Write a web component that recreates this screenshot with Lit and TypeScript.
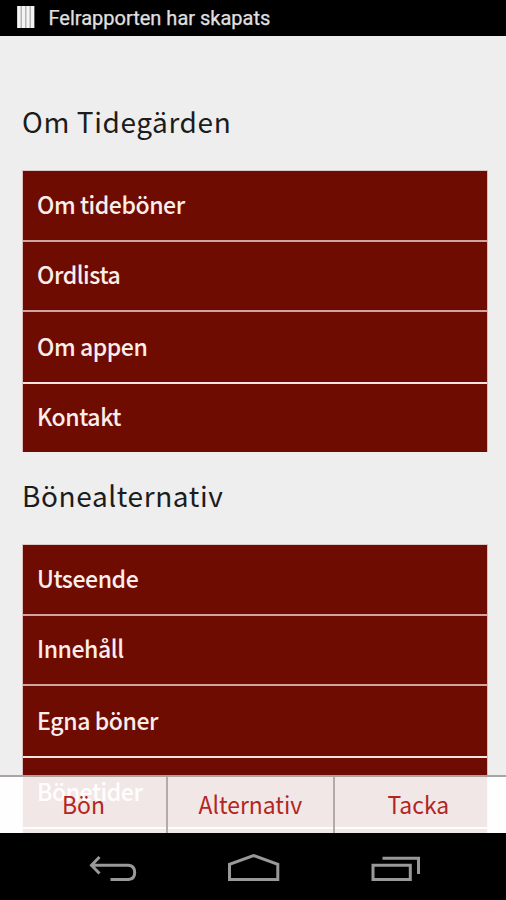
import { LitElement, html, css } from "lit";
import { customElement } from "lit/decorators.js";

interface Row { label: string; height: number; leading: number; line: string; }

const about: Row[] = [
  { label: "Om tideböner", height: 69, leading: 65, line: "soft" },
  { label: "Ordlista", height: 68, leading: 64, line: "soft" },
  { label: "Om appen", height: 70, leading: 68, line: "strong" },
  { label: "Kontakt", height: 68, leading: 64, line: "none" },
];
const prayer: Row[] = [
  { label: "Utseende", height: 69, leading: 66, line: "soft" },
  { label: "Innehåll", height: 68, leading: 64, line: "soft" },
  { label: "Egna böner", height: 70, leading: 68, line: "strong" },
  { label: "Bönetider", height: 69, leading: 65, line: "strong" },
  { label: "", height: 8, leading: 8, line: "none" },
];

@customElement("app-root")
export class AppRoot extends LitElement {
  static styles = css`
    :host {
      display: flex;
      flex-direction: column;
      position: relative;
      height: 900px;
      width: 506px;
      overflow: hidden;
      background: #eeeeee;
      font-family: "Noto Sans CJK SC", "Noto Sans", sans-serif;
    }
    * { box-sizing: border-box; }
    .status {
      flex: none;
      height: 36px;
      background: #000;
      color: #e0e0e0;
      display: flex;
      align-items: center;
      padding-left: 16.5px;
      gap: 14px;
      font: 400 20px/36px Roboto, sans-serif;
      -webkit-text-stroke: 0.25px #e0e0e0;
      white-space: nowrap;
    }
    .status svg { display: block; margin-top: -2px; }
    .content {
      flex: none;
      height: 797px;
      overflow: hidden;
      padding: 50px 18px 0 22px;
    }
    h1 {
      margin: 0;
      height: 84px;
      padding-top: 15px;
      font-size: 28px;
      line-height: 40px;
      font-weight: 400;
      letter-spacing: 0.6px;
      color: #1c1c1c;
      white-space: nowrap;
    }
    .list + h1 { height: 92px; padding-top: 23px; }
    .list {
      width: 466px;
      border-left: 1px solid #dcbfbf;
      border-right: 1px solid #d9bdbd;
      border-top: 1px solid #dcc8c8;
      background: #6f0c02;
    }
    .row {
      box-sizing: content-box;
      padding-left: 14px;
      color: #fbeeea;
      font-size: 24px;
      font-weight: 500;
      white-space: nowrap;
    }
    .row span, .tab span {
      display: inline-block;
      letter-spacing: -0.47px;
      transform: scaleX(0.96);
      transform-origin: left;
    }
    .row.soft { border-bottom: 2px solid #cfa5a2; }
    .row.strong { border-bottom: 2px solid #f3e4e2; }
    .tabs {
      position: absolute;
      left: 0;
      top: 775px;
      width: 506px;
      height: 58px;
      display: grid;
      grid-template-columns: 168px 167px 171px;
      background: rgba(255, 255, 255, 0.9);
      border-top: 2px solid #aaa3a3;
    }
    .tab {
      text-align: center;
      font-size: 24px;
      line-height: 53px;
      color: #b32523;
      border-right: 2px solid #b5aaaa;
      white-space: nowrap;
    }
    .tab span { letter-spacing: 0; transform: scaleX(0.955); transform-origin: center; }
    .tab:last-child { border-right: 0; padding-right: 4px; }
    .system {
      flex: none;
      height: 67px;
      background: #000;
    }
    .system svg { display: block; }
  `;

  private list(rows: Row[]) {
    return html`<div class="list">
      ${rows.map((r) => html`<div class="row ${r.line}" style="height:${r.height}px;line-height:${r.leading}px"><span>${r.label}</span></div>`)}
    </div>`;
  }

  render() {
    return html`
      <div class="status">
        <svg width="18" height="22" viewBox="0 0 18 22">
          <path d="M0 0H17.5V22H0Z" fill="#b4b4b4" />
          <path d="M2 0V22M6.500 0V22M11 0V22M15.500 0V22" stroke="#f4f4f4" stroke-width="3" />
        </svg>
        <span>Felrapporten har skapats</span>
      </div>
      <main class="content">
        <h1>Om Tidegärden</h1>
        ${this.list(about)}
        <h1>Bönealternativ</h1>
        ${this.list(prayer)}
      </main>
      <nav class="tabs">
        <div class="tab"><span>Bön</span></div>
        <div class="tab"><span>Alternativ</span></div>
        <div class="tab"><span>Tacka</span></div>
      </nav>
      <div class="system">
        <svg width="506" height="67" viewBox="0 833 506 67" fill="none" stroke="#999" stroke-width="3">
          <path d="M99.500 857L91.500 865.300L99.500 873.500M92 865.300H128.500Q134.700 866 134.700 872.500T128.500 879.500H110.500" />
          <path d="M229.500 879.500V864.300L253.500 855.500L277.800 864.300V879.500Z" />
          <path d="M373 865.300H410.300V879.500H373ZM382.500 858.300H418.500V874" />
        </svg>
      </div>
    `;
  }
}
